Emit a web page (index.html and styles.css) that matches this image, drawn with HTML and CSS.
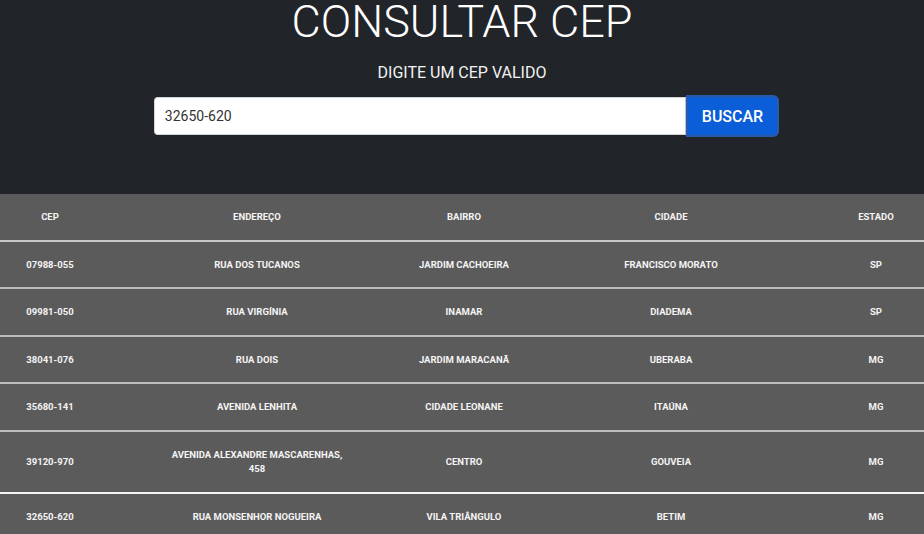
FILE: index.html
```html
<!DOCTYPE html>
<html lang="pt-BR">
<head>
<meta charset="utf-8">
<title>Consultar CEP</title>
<link rel="stylesheet" href="styles.css">
</head>
<body>
<header class="hero">
  <h1 class="title">CONSULTAR CEP</h1>
  <p class="subtitle">DIGITE UM CEP VALIDO</p>
  <form class="search">
    <input class="search-input" type="text" value="32650-620">
    <button class="search-btn" type="button">BUSCAR</button>
  </form>
</header>
<table class="results">
  <colgroup>
    <col class="c-narrow"><col class="c-wide"><col class="c-narrow"><col class="c-wide"><col class="c-last">
  </colgroup>
  <thead>
    <tr><th>CEP</th><th>ENDEREÇO</th><th>BAIRRO</th><th>CIDADE</th><th>ESTADO</th></tr>
  </thead>
  <tbody>
    <tr><td>07988-055</td><td>RUA DOS TUCANOS</td><td>JARDIM CACHOEIRA</td><td>FRANCISCO MORATO</td><td>SP</td></tr>
    <tr><td>09981-050</td><td>RUA VIRGÍNIA</td><td>INAMAR</td><td>DIADEMA</td><td>SP</td></tr>
    <tr><td>38041-076</td><td>RUA DOIS</td><td>JARDIM MARACANÃ</td><td>UBERABA</td><td>MG</td></tr>
    <tr><td>35680-141</td><td>AVENIDA LENHITA</td><td>CIDADE LEONANE</td><td>ITAÚNA</td><td>MG</td></tr>
    <tr class="strong-line"><td>39120-970</td><td class="tall"><span class="addr">AVENIDA ALEXANDRE MASCARENHAS, 458</span></td><td>CENTRO</td><td>GOUVEIA</td><td>MG</td></tr>
    <tr><td>32650-620</td><td>RUA MONSENHOR NOGUEIRA</td><td>VILA TRIÂNGULO</td><td>BETIM</td><td>MG</td></tr>
  </tbody>
</table>
</body>
</html>
```

FILE: styles.css
```css
* { box-sizing: border-box; }
html, body { margin: 0; padding: 0; }
body {
  font-family: Roboto, "Liberation Sans", Arial, sans-serif;
  background: #5c5b5b;
  color: #fff;
  overflow: hidden;
}
.hero {
  background: #212529;
  height: 194px;
  display: flex;
  flex-direction: column;
  align-items: center;
}
.title {
  margin: 0;
  font-weight: 300;
  font-size: 45px;
  line-height: 44px;
  letter-spacing: 0;
}
.subtitle {
  margin: 19px 0 0;
  font-size: 16px;
  line-height: 20px;
  font-weight: 400;
  color: #f2f2f2;
}
.search {
  display: flex;
  align-items: center;
  margin-top: 14px;
  margin-left: 7px;
}
.search-input {
  width: 533px;
  height: 38px;
  border: 1px solid #ced4da;
  border-right: 2px solid #a9c6f5;
  border-radius: 4px 0 0 4px;
  padding: 0 10px;
  font-family: Roboto, "Liberation Sans", Arial, sans-serif;
  font-size: 14px;
  color: #333;
  background: #fff;
  outline: none;
}
.search-btn {
  height: 38px;
  padding: 0 14px;
  border: none;
  border-radius: 0 4px 4px 0;
  background: #0b5ed7;
  color: #fff;
  font-family: Roboto, "Liberation Sans", Arial, sans-serif;
  font-size: 16px;
  font-weight: 500;
  box-shadow: 0 0 0 2px #2b5aa6;
  margin-left: 1px;
}
.results {
  width: 924px;
  border-collapse: collapse;
  table-layout: fixed;
  background: #5c5b5b;
}
.c-narrow { width: 100px; }
.c-wide { width: 314px; }
.c-last { width: 96px; }
.results th,
.results td {
  text-align: center;
  font-size: 9.5px;
  font-weight: 700;
  line-height: 13.5px;
  padding: 16px 2px;
  color: #f4f4f4;
}
.results td.tall { line-height: 14px; }
.results thead tr { border-bottom: 2px solid #c8c8c8; }
.results tbody tr { border-bottom: 2px solid #bdbdbd; }
.results tbody tr.strong-line { border-bottom-color: #f4f4f4; }
.addr { display: inline-block; max-width: 178px; }
```
